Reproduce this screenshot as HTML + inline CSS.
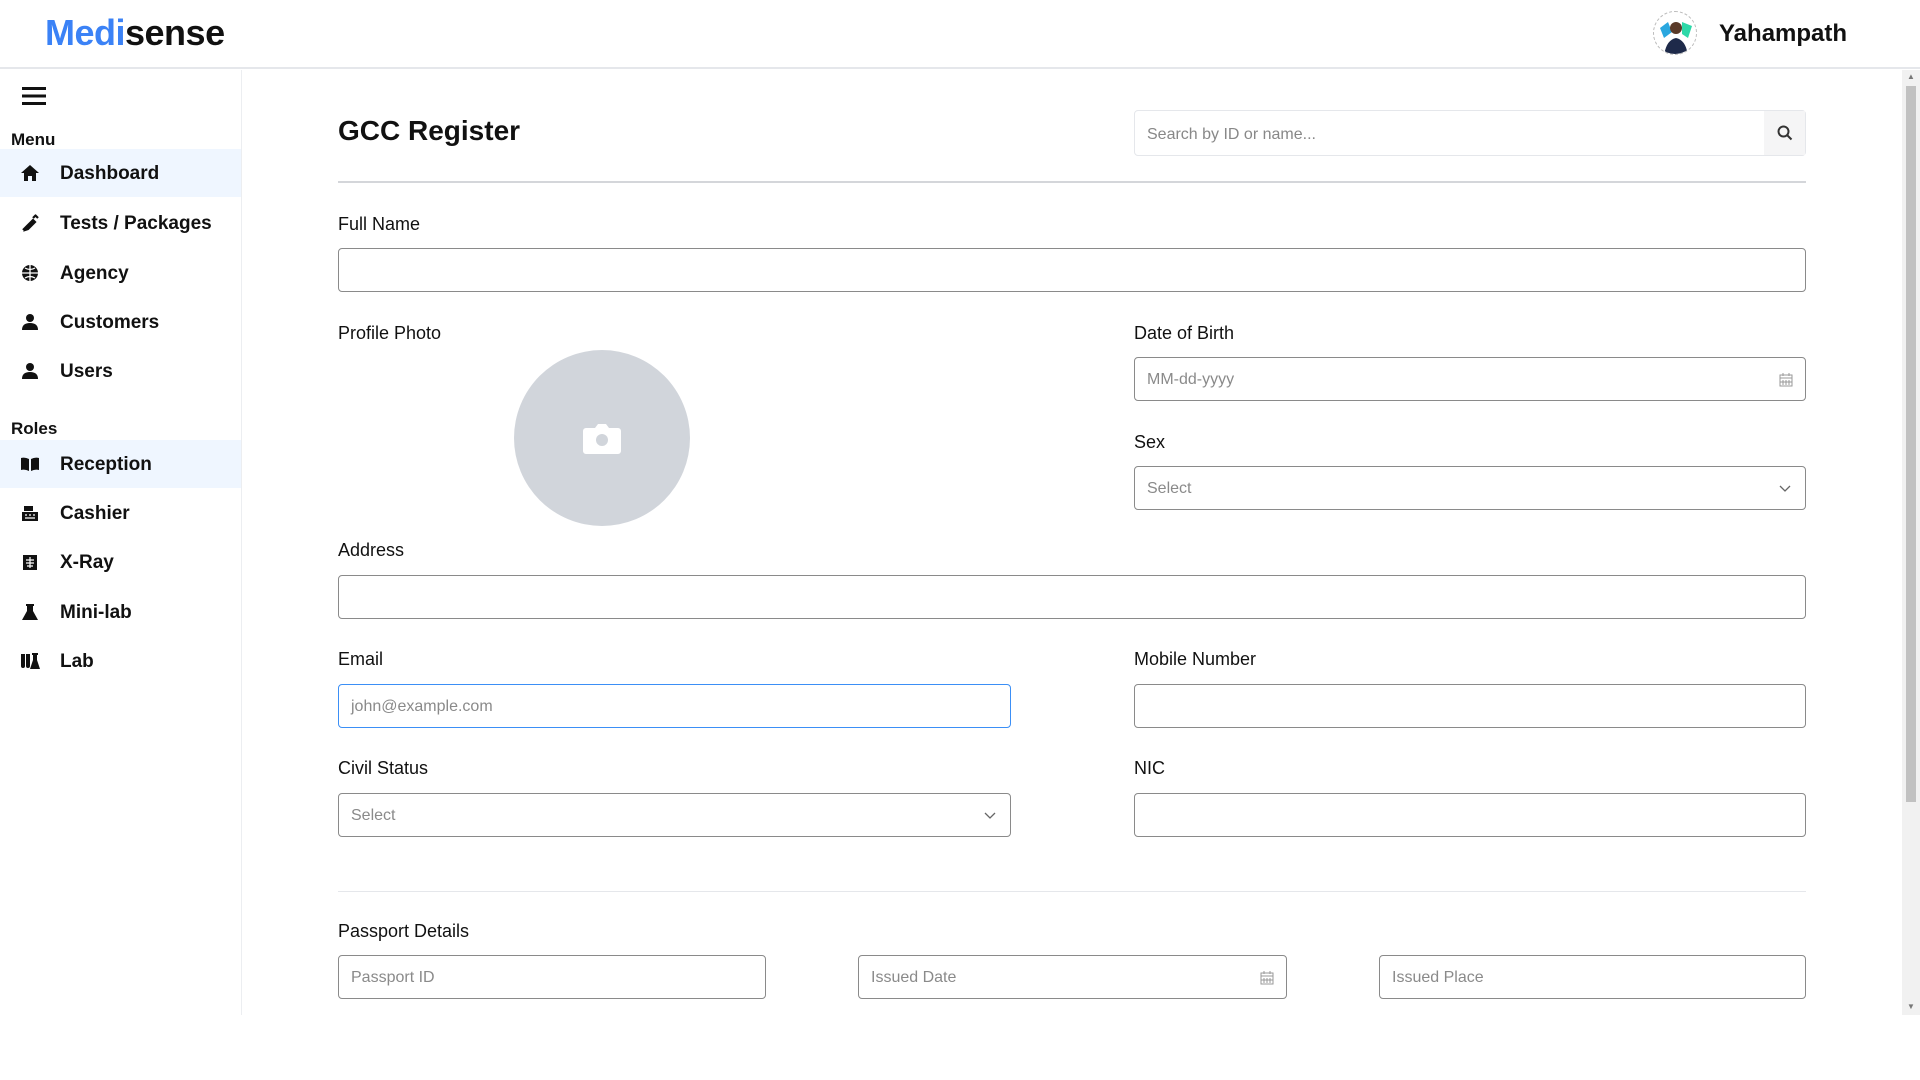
<!DOCTYPE html>
<html><head><meta charset="utf-8"><style>
*{box-sizing:border-box;margin:0;padding:0}
body{width:1920px;height:1080px;background:#fff;font-family:"Liberation Sans",sans-serif;color:#111;position:relative;overflow:hidden}
.a{position:absolute}
.hdr{left:0;top:0;width:1920px;height:69px;border-bottom:2px solid #e5e7eb;background:#fff}
.logo{left:45px;top:12px;font-size:36px;font-weight:bold;letter-spacing:-0.5px}
.side{left:0;top:70px;width:242px;height:945px;border-right:1px solid #eceef1}
.sec{left:11px;font-size:17px;font-weight:bold}
.item{left:0;width:241px;height:48px;font-size:19px;font-weight:bold;display:flex;align-items:center}
.item.on{background:#eff6ff}
.item svg{position:absolute;left:20px;width:20px;height:20px}
.item span{position:absolute;left:60px;top:14px}
.lbl{font-size:18px;color:#111}
.inp{border:1px solid #8a8a8a;border-radius:4px;height:44px;background:#fff;font-size:16px;color:#8a8a8a;padding-left:12px;padding-top:2px;display:flex;align-items:center}
.chev{position:absolute;right:14px;top:15px}
.cal{position:absolute;right:12px;top:14px}
</style></head><body>
<div class="a hdr"></div>
<div class="a logo"><span style="color:#3b82f6">Medi</span>sense</div>
<div class="a" style="left:1653px;top:11px;width:44px;height:44px;border-radius:50%;border:1px dashed #bbb;background:#fff;overflow:hidden">
<svg width="44" height="44" viewBox="0 0 44 44"><path d="M6 16 L14 10 L18 20 L10 26Z" fill="#2aa7df"/><path d="M28 10 L38 14 L34 26 L28 22Z" fill="#2ed8a8"/><circle cx="22" cy="16" r="6" fill="#5a3a28"/><path d="M10 44 Q12 28 22 26 Q32 28 34 44Z" fill="#1e2a4a"/></svg></div>
<div class="a" style="left:1719px;top:20px;font-size:24px;font-weight:bold">Yahampath</div>

<div class="a side"></div>
<svg class="a" style="left:22px;top:86px" width="24" height="20" viewBox="0 0 24 20"><rect y="1" width="24" height="3" fill="#111"/><rect y="8.5" width="24" height="3" fill="#111"/><rect y="16" width="24" height="3" fill="#111"/></svg>
<div class="a sec" style="top:130px">Menu</div>
<div class="a item on" style="top:149px"><svg viewBox="0 0 20 20"><path d="M10 2L1 10h3v8h4v-5h4v5h4v-8h3z" fill="#111"/></svg><span>Dashboard</span></div>
<div class="a item" style="top:199px"><svg viewBox="0 0 20 20"><path d="M3 17l4-4M6 14l7-7 2 2-7 7-3 1zM13 5l3-3M15 2l3 3" stroke="#111" stroke-width="2.2" fill="#111"/></svg><span>Tests / Packages</span></div>
<div class="a item" style="top:249px"><svg viewBox="0 0 20 20"><circle cx="10" cy="10" r="8" fill="#111"/><path d="M2 10h16M10 2v16M5 5q5 3 10 0M5 15q5-3 10 0" stroke="#fff" stroke-width="1.3" fill="none"/></svg><span>Agency</span></div>
<div class="a item" style="top:298px"><svg viewBox="0 0 20 20"><circle cx="10" cy="6" r="4" fill="#111"/><path d="M2 18q0-7 8-7t8 7z" fill="#111"/></svg><span>Customers</span></div>
<div class="a item" style="top:347px"><svg viewBox="0 0 20 20"><circle cx="10" cy="6" r="4" fill="#111"/><path d="M2 18q0-7 8-7t8 7z" fill="#111"/></svg><span>Users</span></div>
<div class="a sec" style="top:419px">Roles</div>
<div class="a item on" style="top:440px"><svg viewBox="0 0 20 20"><path d="M1 4q4-1 8 1v12q-4-2-8-1zM11 5q4-2 8-1v12q-4-1-8 1z" fill="#111"/></svg><span>Reception</span></div>
<div class="a item" style="top:489px"><svg viewBox="0 0 20 20"><rect x="2" y="9" width="16" height="9" fill="#111"/><rect x="4" y="3" width="9" height="5" fill="#111"/><path d="M5 12h2M9 12h2M13 12h2M5 15h10" stroke="#fff" stroke-width="1.2"/></svg><span>Cashier</span></div>
<div class="a item" style="top:538px"><svg viewBox="0 0 20 20"><rect x="3" y="3" width="14" height="15" fill="#111"/><path d="M10 5v11M6 8h8M6 11h8M7 14h6" stroke="#fff" stroke-width="1.2"/></svg><span>X-Ray</span></div>
<div class="a item" style="top:588px"><svg viewBox="0 0 20 20"><path d="M6 2h8v2h-1v5l5 9H2l5-9V4H6z" fill="#111"/></svg><span>Mini-lab</span></div>
<div class="a item" style="top:637px"><svg viewBox="0 0 20 20" style="width:24px;left:18px"><path d="M1 3h4v12a2 2 0 0 1-4 0zM6 3h4v12a2 2 0 0 1-4 0zM12 2h6v2h-1v5l3 9h-10l3-9V4h-1z" fill="#111"/></svg><span>Lab</span></div>

<div class="a" style="left:338px;top:115px;font-size:28px;font-weight:bold">GCC Register</div>
<div class="a" style="left:1134px;top:110px;width:672px;height:46px;border:1px solid #e5e7eb;border-radius:4px;font-size:16px;color:#888;padding:15px 12px">Search by ID or name...</div>
<div class="a" style="left:1764px;top:111px;width:41px;height:44px;background:#f5f5f6"><svg style="position:absolute;left:13px;top:14px" width="16" height="16" viewBox="0 0 16 16"><circle cx="6.5" cy="6.5" r="5" stroke="#333" stroke-width="2" fill="none"/><path d="M10 10l4.5 4.5" stroke="#333" stroke-width="2"/></svg></div>
<div class="a" style="left:338px;top:181px;width:1468px;height:2px;background:#d4d6da"></div>

<div class="a lbl" style="left:338px;top:214px">Full Name</div>
<div class="a inp" style="left:338px;top:248px;width:1468px"></div>
<div class="a lbl" style="left:338px;top:323px">Profile Photo</div>
<div class="a" style="left:514px;top:350px;width:176px;height:176px;border-radius:50%;background:#d1d5db"></div>
<svg class="a" style="left:582px;top:422px" width="40" height="34" viewBox="0 0 40 34"><path d="M4 6h9l3-4h8l3 4h9a3 3 0 0 1 3 3v20a3 3 0 0 1-3 3H4a3 3 0 0 1-3-3V9a3 3 0 0 1 3-3z" fill="#fff"/><circle cx="20" cy="18" r="6" fill="#d1d5db"/></svg>

<div class="a lbl" style="left:1134px;top:323px">Date of Birth</div>
<div class="a inp" style="left:1134px;top:357px;width:672px">MM-dd-yyyy<svg class="cal" width="14" height="15" viewBox="0 0 14 15"><rect x="1" y="3" width="12" height="11" fill="none" stroke="#999"/><path d="M1 6h12M4 1v3M10 1v3M4 8v5M7 8v5M10 8v5M1 10h12" stroke="#999"/></svg></div>
<div class="a lbl" style="left:1134px;top:432px">Sex</div>
<div class="a inp" style="left:1134px;top:466px;width:672px">Select<svg class="chev" width="12" height="12" viewBox="0 0 12 12"><path d="M1 4l5 5 5-5" stroke="#666" stroke-width="1.3" fill="none"/></svg></div>

<div class="a lbl" style="left:338px;top:540px">Address</div>
<div class="a inp" style="left:338px;top:575px;width:1468px"></div>
<div class="a lbl" style="left:338px;top:649px">Email</div>
<div class="a inp" style="left:338px;top:684px;width:673px;border-color:#3b8ff6">john@example.com</div>
<div class="a lbl" style="left:1134px;top:649px">Mobile Number</div>
<div class="a inp" style="left:1134px;top:684px;width:672px"></div>
<div class="a lbl" style="left:338px;top:758px">Civil Status</div>
<div class="a inp" style="left:338px;top:793px;width:673px">Select<svg class="chev" width="12" height="12" viewBox="0 0 12 12"><path d="M1 4l5 5 5-5" stroke="#666" stroke-width="1.3" fill="none"/></svg></div>
<div class="a lbl" style="left:1134px;top:758px">NIC</div>
<div class="a inp" style="left:1134px;top:793px;width:672px"></div>

<div class="a" style="left:338px;top:891px;width:1468px;height:1px;background:#e5e7eb"></div>
<div class="a lbl" style="left:338px;top:921px">Passport Details</div>
<div class="a inp" style="left:338px;top:955px;width:428px">Passport ID</div>
<div class="a inp" style="left:858px;top:955px;width:429px">Issued Date<svg class="cal" width="14" height="15" viewBox="0 0 14 15"><rect x="1" y="3" width="12" height="11" fill="none" stroke="#999"/><path d="M1 6h12M4 1v3M10 1v3M4 8v5M7 8v5M10 8v5M1 10h12" stroke="#999"/></svg></div>
<div class="a inp" style="left:1379px;top:955px;width:427px">Issued Place</div>

<div class="a" style="left:1902px;top:70px;width:18px;height:945px;background:#f1f1f1"></div>
<div class="a" style="left:1906px;top:86px;width:10px;height:716px;background:#c1c1c1"></div>
<div class="a" style="left:1907px;top:72px;font-size:8px;color:#777">▲</div>
<div class="a" style="left:1907px;top:1002px;font-size:8px;color:#777">▼</div>
<div class="a" style="left:0;top:1015px;width:1920px;height:65px;background:#fff"></div>
</body></html>
